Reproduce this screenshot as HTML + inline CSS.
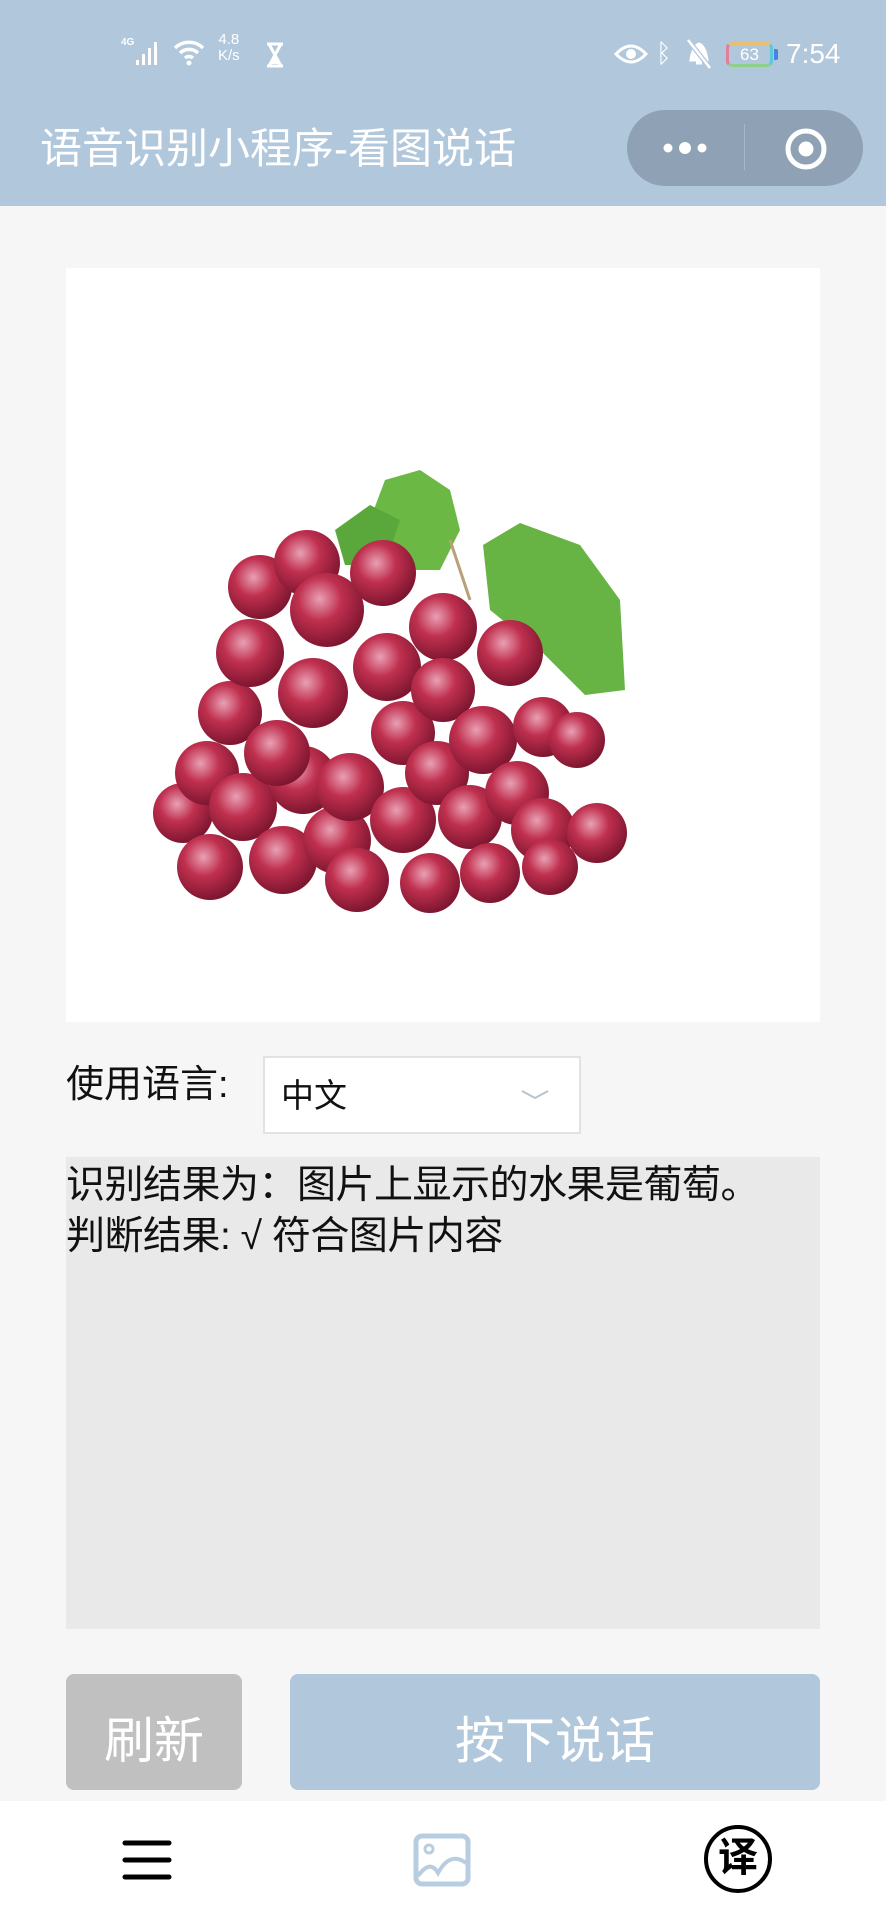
<!DOCTYPE html>
<html><head><meta charset="utf-8"><style>
*{margin:0;padding:0;box-sizing:border-box}
body{width:886px;height:1920px;background:#f6f6f6;position:relative;overflow:hidden;font-family:"Liberation Sans","Noto Sans CJK SC",sans-serif;}
.abs{position:absolute}
#hdr{left:0;top:0;width:886px;height:206px;background:#b1c7dc}
.w{color:#fff}
</style></head><body>
<div id="hdr" class="abs"></div>
<!-- status bar -->
<div class="abs w" style="left:121px;top:37px;font-size:10px;font-weight:bold">4G</div>
<svg class="abs" style="left:134px;top:40px" width="32" height="26" viewBox="0 0 32 26"><rect x="2" y="20" width="3" height="5" fill="#fff"/><rect x="8" y="14" width="3" height="11" fill="#fff"/><rect x="14" y="8" width="3" height="17" fill="#fff"/><rect x="20" y="2" width="3" height="23" fill="#fff"/></svg>
<svg class="abs" style="left:172px;top:38px" width="34" height="28" viewBox="0 0 34 28"><path d="M3 10 A20 20 0 0 1 31 10" stroke="#fff" stroke-width="3.5" fill="none"/><path d="M8 15 A13 13 0 0 1 26 15" stroke="#fff" stroke-width="3.5" fill="none"/><path d="M13 20 A6 6 0 0 1 21 20" stroke="#fff" stroke-width="3.5" fill="none"/><circle cx="17" cy="25" r="2.5" fill="#fff"/></svg>
<div class="abs w" style="left:218px;top:32px;font-size:15px;line-height:16px;text-align:center">4.8<br>K/s</div>
<svg class="abs" style="left:265px;top:42px" width="20" height="26" viewBox="0 0 20 26"><path d="M2 2H18M2 24H18M4 2L16 24M16 2L4 24" stroke="#fff" stroke-width="3" fill="none"/><path d="M6 22L10 15L14 22Z" fill="#fff"/></svg>
<svg class="abs" style="left:614px;top:42px" width="34" height="24" viewBox="0 0 34 24"><path d="M2 12 Q17 -4 32 12 Q17 28 2 12Z" stroke="#fff" stroke-width="3" fill="none"/><circle cx="17" cy="12" r="5" fill="#fff"/></svg>
<div class="abs w" style="left:656px;top:38px;font-size:26px;line-height:30px">&#x16D2;</div>
<svg class="abs" style="left:686px;top:38px" width="26" height="32" viewBox="0 0 26 32"><path d="M5 22 Q7 8 13 6 Q19 8 21 22Z M10 25H16" stroke="#fff" stroke-width="3" fill="#fff"/><path d="M2 2L24 30" stroke="#b1c7dc" stroke-width="5"/><path d="M2 2L24 30" stroke="#fff" stroke-width="2.5"/></svg>
<div class="abs" style="left:726px;top:42px;width:47px;height:25px;border:3px solid #e07f9a;border-right-color:#5cc8d8;border-top-color:#e8c070;border-bottom-color:#8cd08a;border-radius:6px;font-size:17px;color:#fff;text-align:center;line-height:19px">63</div>
<div class="abs" style="left:774px;top:49px;width:4px;height:11px;background:#4a80e0;border-radius:0 2px 2px 0"></div>
<div class="abs w" style="left:786px;top:38px;font-size:28px;line-height:32px">7:54</div>
<!-- title -->
<div class="abs w" style="left:40px;top:124px;font-size:42px;line-height:50px;white-space:nowrap">语音识别小程序-看图说话</div>
<div class="abs" style="left:627px;top:110px;width:236px;height:76px;border-radius:38px;background:#8fa2b5"></div>
<div class="abs" style="left:744px;top:124px;width:1px;height:46px;background:#a8b8c8"></div>
<svg class="abs" style="left:660px;top:138px" width="50" height="20"><circle cx="8" cy="10" r="4.5" fill="#fff"/><circle cx="25" cy="10" r="6" fill="#fff"/><circle cx="42" cy="10" r="4.5" fill="#fff"/></svg>
<svg class="abs" style="left:783px;top:126px" width="46" height="46"><circle cx="23" cy="23" r="18" stroke="#fff" stroke-width="5" fill="none"/><circle cx="23" cy="23" r="7.5" fill="#fff"/></svg>
<!-- image -->
<div class="abs" style="left:66px;top:268px;width:754px;height:754px;background:#fff"></div>
<svg class="abs" style="left:0;top:0" width="886" height="1020">
<defs><radialGradient id="g" cx="40%" cy="35%" r="65%"><stop offset="0" stop-color="#e9a0b4"/><stop offset="0.45" stop-color="#c0304f"/><stop offset="1" stop-color="#7e1630"/></radialGradient></defs>
<path d="M370 520 L385 480 L420 470 L450 490 L460 530 L440 570 L390 570Z" fill="#6cb845"/>
<path d="M335 530 L370 505 L400 520 L385 565 L345 565Z" fill="#5aa83c"/>
<path d="M483 545 L520 523 L580 545 L620 600 L625 690 L585 695 L540 650 L490 610Z" fill="#67b444"/>
<path d="M450 540 L470 600" stroke="#b9a07a" stroke-width="3"/>
<g fill="url(#g)">
<circle cx="183" cy="813" r="30"/><circle cx="210" cy="867" r="33"/><circle cx="207" cy="773" r="32"/><circle cx="243" cy="807" r="34"/><circle cx="283" cy="860" r="34"/><circle cx="230" cy="713" r="32"/><circle cx="250" cy="653" r="34"/><circle cx="260" cy="587" r="32"/><circle cx="303" cy="780" r="34"/><circle cx="277" cy="753" r="33"/><circle cx="313" cy="693" r="35"/><circle cx="307" cy="563" r="33"/><circle cx="327" cy="610" r="37"/><circle cx="383" cy="573" r="33"/><circle cx="337" cy="840" r="34"/><circle cx="357" cy="880" r="32"/><circle cx="350" cy="787" r="34"/><circle cx="387" cy="667" r="34"/><circle cx="403" cy="733" r="32"/><circle cx="403" cy="820" r="33"/><circle cx="430" cy="883" r="30"/><circle cx="443" cy="627" r="34"/><circle cx="443" cy="690" r="32"/><circle cx="437" cy="773" r="32"/><circle cx="470" cy="817" r="32"/><circle cx="490" cy="873" r="30"/><circle cx="483" cy="740" r="34"/><circle cx="510" cy="653" r="33"/><circle cx="517" cy="793" r="32"/><circle cx="543" cy="727" r="30"/><circle cx="543" cy="830" r="32"/><circle cx="550" cy="867" r="28"/><circle cx="577" cy="740" r="28"/><circle cx="597" cy="833" r="30"/>
</g></svg>
<!-- language -->
<div class="abs" style="left:66px;top:1062px;font-size:38px;line-height:46px;color:#111">使用语言:</div>
<div class="abs" style="left:263px;top:1056px;width:318px;height:78px;background:#fff;border:2px solid #e2e2e2"></div>
<div class="abs" style="left:281px;top:1074px;font-size:33px;line-height:44px;color:#111">中文</div>
<svg class="abs" style="left:520px;top:1088px" width="30" height="14"><path d="M2 3L15 10L28 3" stroke="#b8c4cf" stroke-width="2" fill="none"/></svg>
<!-- result -->
<div class="abs" style="left:66px;top:1157px;width:754px;height:472px;background:#e9e9e9"></div>
<div class="abs" style="left:66px;top:1160px;font-size:39px;line-height:51px;color:#111;white-space:nowrap;letter-spacing:-0.5px">识别结果为：图片上显示的水果是葡萄。<br>判断结果: √ 符合图片内容</div>
<!-- buttons -->
<div class="abs w" style="left:66px;top:1674px;width:176px;height:116px;background:#c0c0c1;border-radius:8px;font-size:50px;line-height:134px;text-align:center">刷新</div>
<div class="abs w" style="left:290px;top:1674px;width:530px;height:116px;background:#b1c7dc;border-radius:8px;font-size:50px;line-height:134px;text-align:center;overflow:hidden">按下说话</div>
<!-- tab bar -->
<div class="abs" style="left:0;top:1801px;width:886px;height:119px;background:#fff"></div>
<svg class="abs" style="left:120px;top:1838px" width="54" height="44"><path d="M5 5H49M5 22H49M5 39H49" stroke="#000" stroke-width="5" stroke-linecap="round"/></svg>
<svg class="abs" style="left:410px;top:1833px" width="64" height="56" viewBox="0 0 64 56"><rect x="6" y="3" width="52" height="48" rx="6" stroke="#b9cde0" stroke-width="5" fill="none"/><circle cx="19" cy="16" r="4" stroke="#b9cde0" stroke-width="3" fill="none"/><path d="M8 43 Q20 26 28 40 Q40 18 56 30" stroke="#b9cde0" stroke-width="4" fill="none"/></svg>
<div class="abs" style="left:704px;top:1825px;width:68px;height:68px;border:4px solid #000;border-radius:50%;font-size:40px;line-height:58px;text-align:center;color:#000;font-weight:bold">译</div>
</body></html>
